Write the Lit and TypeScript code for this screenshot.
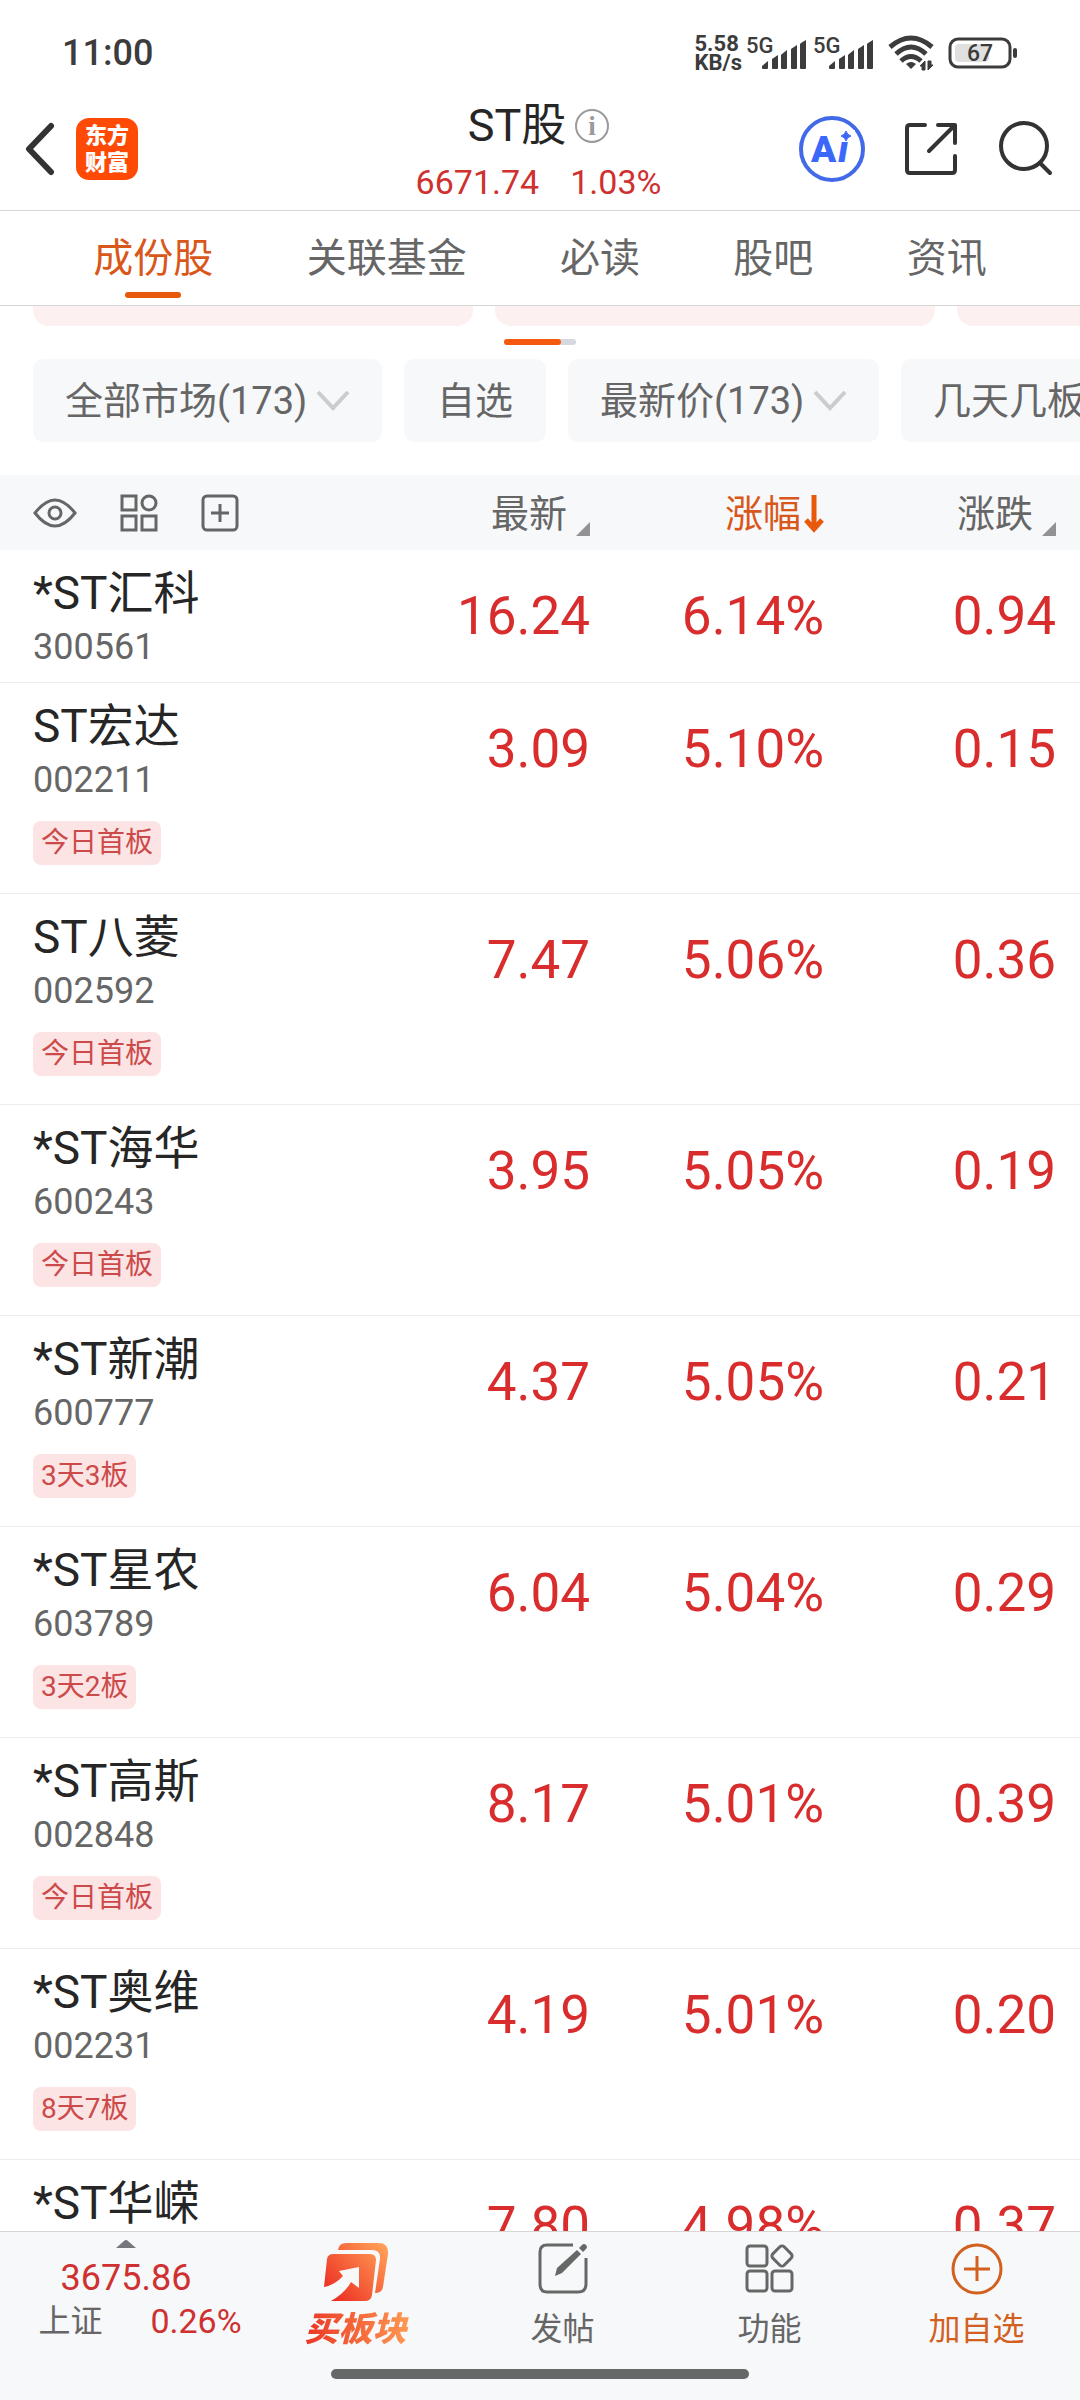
import { LitElement, html, css, nothing } from "lit";
import { customElement, property, state } from "lit/decorators.js";
import { classMap } from "lit/directives/class-map.js";

interface Stock {
  name: string;
  code: string;
  price: string;
  percent: string;
  change: string;
  tag?: string;
}

const STOCKS: Stock[] = [
  { name: "*ST汇科", code: "300561", price: "16.24", percent: "6.14%", change: "0.94" },
  { name: "ST宏达", code: "002211", price: "3.09", percent: "5.10%", change: "0.15", tag: "今日首板" },
  { name: "ST八菱", code: "002592", price: "7.47", percent: "5.06%", change: "0.36", tag: "今日首板" },
  { name: "*ST海华", code: "600243", price: "3.95", percent: "5.05%", change: "0.19", tag: "今日首板" },
  { name: "*ST新潮", code: "600777", price: "4.37", percent: "5.05%", change: "0.21", tag: "3天3板" },
  { name: "*ST星农", code: "603789", price: "6.04", percent: "5.04%", change: "0.29", tag: "3天2板" },
  { name: "*ST高斯", code: "002848", price: "8.17", percent: "5.01%", change: "0.39", tag: "今日首板" },
  { name: "*ST奥维", code: "002231", price: "4.19", percent: "5.01%", change: "0.20", tag: "8天7板" },
  { name: "*ST华嵘", code: "", price: "7.80", percent: "4.98%", change: "0.37" },
];

const TABS = ["成份股", "关联基金", "必读", "股吧", "资讯"];

const base = css`
  :host, *, *::before, *::after { box-sizing: border-box; }
  button, select {
    margin: 0;
    padding: 0;
    border: 0;
    background: none;
    font: inherit;
    color: inherit;
    appearance: none;
    cursor: pointer;
  }
  svg { display: block; flex: none; }
`;

@customElement("status-bar")
class StatusBar extends LitElement {
  static styles = [base, css`
    :host {
      display: flex;
      flex: none;
      align-items: center;
      justify-content: space-between;
      height: 88px;
      padding: 18px 63px 0 62px;
      color: #3c3c3c;
    }
    .time { font-size: 36px; font-weight: 500; line-height: 40px; }
    .icons { display: flex; align-items: center; }
    .speed { font-size: 22px; line-height: 19px; font-weight: 700; margin-right: 4px; }
    .signal { margin-right: 5px; overflow: visible; }
    .wifi { margin: 0 14px 0 8px; }
    .g { font: 500 22px Roboto, sans-serif; fill: #3c3c3c; }
    .level { font: 500 23px Roboto, sans-serif; fill: #3c3c3c; }
  `];

  private signal() {
    return html`<svg class="signal" width="62" height="34" viewBox="0 0 62 34" fill="#3c3c3c">
      <text class="g" x="0" y="17">5G</text>
      <path d="M16 30l6-5v7q0 1-1 1h-4q-1 0-1-1zM26 23l6-4v13q0 1-1 1h-4q-1 0-1-1v-9zM36 18l5-4v18q0 1-1 1h-4q-1 0-1-1V19zM45 13l6-4v23q0 1-1 1h-4q-1 0-1-1V13zM55 7l5-3v28q0 1-1 1h-4q-1 0-1-1V8z" />
    </svg>`;
  }

  render() {
    return html`
      <div class="time">11:00</div>
      <div class="icons">
        <div class="speed">5.58<br />KB/s</div>
        ${this.signal()}${this.signal()}
        <svg class="wifi" width="46" height="36" viewBox="0 0 46 36" fill="none" stroke="#3c3c3c" stroke-width="5">
          <path d="M2 12Q23-6 44 12M8 19Q23 5 38 19M13 26Q23 17 33 26" />
          <path d="M18 29q5-4 10 0l-5 5z" fill="#3c3c3c" stroke="none" />
          <path d="M32 31l5-5v9h-3v-4zM45 30l-5 5v-9h3v4z" fill="#3c3c3c" stroke="#3c3c3c" stroke-width="1" />
        </svg>
        <svg width="69" height="32" viewBox="0 0 69 32">
          <rect x="2" y="2" width="60" height="28" rx="8" fill="#fff" stroke="#3c3c3c" stroke-width="3" />
          <rect x="7" y="7" width="34" height="18" rx="4" fill="#e0e0e0" />
          <rect x="65" y="11" width="4" height="10" rx="2" fill="#3c3c3c" />
          <text class="level" x="32" y="24" text-anchor="middle">67</text>
        </svg>
      </div>`;
  }
}

@customElement("page-header")
class PageHeader extends LitElement {
  static styles = [base, css`
    :host {
      display: grid;
      flex: none;
      grid-template-columns: 1fr auto 1fr;
      align-items: center;
      height: 123px;
      padding: 0 27px 0 24px;
      border-bottom: 1px solid #d6d6d6;
    }
    .left, .right, .title { display: flex; align-items: center; }
    .left { gap: 20px; }
    .right { justify-content: flex-end; gap: 39px; }
    .logo {
      display: grid;
      place-content: center;
      width: 62px;
      height: 62px;
      border-radius: 13px;
      background: #ff4a06;
      color: #fff;
      font-size: 22px;
      line-height: 27px;
      font-weight: 900;
      text-decoration: none;
    }
    .middle { padding-top: 10px; }
    .title {
      margin: 0;
      justify-content: center;
      gap: 9px;
      font-size: 45px;
      line-height: 56px;
      font-weight: 400;
      color: #262626;
    }
    .quote {
      display: flex;
      justify-content: center;
      gap: 31px;
      font-size: 34px;
      line-height: 56px;
      color: #cf3030;
    }
    .info { font: 700 27px "Liberation Serif", serif; fill: #9a9a9a; }
    .ai { font: 900 37px Roboto, sans-serif; fill: #3b68fb; }
    .slant { font-style: italic; }
  `];

  render() {
    return html`
      <div class="left">
        <button aria-label="返回">
          <svg width="32" height="54" viewBox="0 0 32 54" fill="none" stroke="#333" stroke-width="6" stroke-linecap="round" stroke-linejoin="round">
            <path d="M27 4L5 27l22 23" />
          </svg>
        </button>
        <a class="logo" href="#home">东方<br />财富</a>
      </div>
      <div class="middle">
        <h1 class="title">
          <span>ST股</span>
          <button aria-label="说明">
            <svg width="34" height="34" viewBox="0 0 34 34">
              <circle cx="17" cy="17" r="16" fill="none" stroke="#9a9a9a" stroke-width="2" />
              <text class="info" x="17" y="26" text-anchor="middle">i</text>
            </svg>
          </button>
        </h1>
        <div class="quote"><span>6671.74</span><span>1.03%</span></div>
      </div>
      <div class="right">
        <button aria-label="智能助手">
          <svg width="66" height="66" viewBox="0 0 66 66">
            <circle cx="33" cy="33" r="31" fill="#fff" stroke="#4169e8" stroke-width="4" />
            <text class="ai" x="12" y="46">A<tspan class="slant" dx="2">i</tspan></text>
            <rect x="38" y="14" width="18" height="10" fill="#fff" />
            <path d="M47 15q1 4 5 5q-4 1-5 5q-1-4-5-5q4-1 5-5z" fill="#3b68fb" stroke="#3b68fb" stroke-width="1" />
          </svg>
        </button>
        <button aria-label="分享">
          <svg width="54" height="54" viewBox="0 0 54 54" fill="none" stroke="#333" stroke-width="4" stroke-linecap="round" stroke-linejoin="round">
            <path d="M21 3H6q-3 0-3 3v42q0 3 3 3h42q3 0 3-3V34M34 3h17v18M51 3L25 29" />
          </svg>
        </button>
        <button aria-label="搜索">
          <svg width="56" height="56" viewBox="0 0 56 56" fill="none" stroke="#333" stroke-width="4" stroke-linecap="round">
            <circle cx="27" cy="25" r="23" />
            <path d="M43 42l10 10" />
          </svg>
        </button>
      </div>`;
  }
}

@customElement("section-tabs")
class SectionTabs extends LitElement {
  @state() private current = 0;

  static styles = [base, css`
    :host {
      display: flex;
      flex: none;
      justify-content: space-evenly;
      height: 95px;
      border-bottom: 1px solid #d6d6d6;
      font-size: 40px;
      color: #666;
    }
    .tab {
      display: flex;
      flex-direction: column;
      align-items: center;
      padding-top: 18px;
      line-height: 60px;
      white-space: nowrap;
    }
    .bar { width: 56px; height: 6px; margin-top: 3px; border-radius: 3px; }
    .active { color: #d9571a; }
    .active .bar { background: #e8590c; }
  `];

  render() {
    return TABS.map((label, i) => html`
      <button class=${classMap({ tab: true, active: i === this.current })}
        aria-pressed=${i === this.current ? "true" : "false"}
        @click=${() => (this.current = i)}>
        ${label}<span class="bar"></span>
      </button>`);
  }
}

@customElement("card-strip")
class CardStrip extends LitElement {
  static styles = [base, css`
    :host { display: block; flex: none; }
    .cards { display: flex; gap: 22px; padding-left: 33px; overflow: hidden; }
    .card { flex: none; width: 440px; height: 20px; border-radius: 0 0 16px 16px; background: #fdf0f0; }
    .track {
      width: 72px;
      height: 6px;
      margin: 13px auto 14px;
      border-radius: 3px;
      background: #d5d8de;
    }
    .thumb { width: 57px; height: 6px; border-radius: 3px; background: #f5590f; }
  `];

  render() {
    return html`
      <div class="cards"><div class="card"></div><div class="card"></div><div class="card"></div></div>
      <div class="track"><div class="thumb"></div></div>`;
  }
}

@customElement("filter-row")
class FilterRow extends LitElement {
  static styles = [base, css`
    :host {
      display: flex;
      flex: none;
      gap: 22px;
      padding: 0 0 33px 33px;
      overflow: hidden;
      font-size: 38px;
      line-height: 56px;
      color: #666;
      white-space: nowrap;
    }
    .chip {
      display: grid;
      align-items: center;
      flex: none;
      height: 83px;
      border-radius: 10px;
      background: #f7f8fa;
    }
    .plain { padding: 0 33px; }
    .select { grid-area: 1 / 1; height: 83px; padding: 0 74px 0 32px; }
    .arrow { grid-area: 1 / 1; justify-self: end; margin-right: 32px; pointer-events: none; }
  `];

  private menu(label: string) {
    return html`<div class="chip">
      <select class="select" aria-label=${label}><option>${label}</option></select>
      <svg class="arrow" width="34" height="22" viewBox="0 0 34 22" fill="none" stroke="#ccc" stroke-width="4">
        <path d="M2 2l15 16L32 2" />
      </svg>
    </div>`;
  }

  render() {
    return html`
      ${this.menu("全部市场(173)")}
      <button class="chip plain">自选</button>
      ${this.menu("最新价(173)")}
      ${this.menu("几天几板")}`;
  }
}

@customElement("stock-table")
class StockTable extends LitElement {
  @property({ attribute: false }) stocks: Stock[] = [];

  static styles = [base, css`
    :host { display: block; flex: 1; min-height: 0; overflow: hidden; }
    .table { width: 100%; border-collapse: separate; border-spacing: 0; table-layout: fixed; }
    .price { width: 234px; }
    .percent { width: 234px; }
    .change { width: 256px; }
    .head {
      height: 75px;
      padding: 0;
      background: #f7f8fa;
      font-size: 38px;
      line-height: 56px;
      font-weight: 400;
      color: #666;
      text-align: right;
    }
    .tools { display: flex; align-items: center; gap: 43px; padding-left: 33px; }
    .sort { display: inline-flex; align-items: center; gap: 9px; vertical-align: middle; white-space: nowrap; }
    .corner { align-self: flex-end; margin-bottom: 6px; }
    .sorted { gap: 3px; color: #d9571a; }
    .head.change { padding-right: 24px; }
    .cell { padding: 0; border-bottom: 1px solid #ececec; vertical-align: top; text-align: right; }
    .cell.change { padding-right: 24px; }
    .who { padding: 13px 0 11px 33px; text-align: left; font-weight: 400; }
    .tagged { padding-bottom: 28px; }
    .name { font-size: 46px; line-height: 60px; color: #262626; white-space: nowrap; }
    .code { height: 48px; font-size: 36px; line-height: 48px; color: #666; }
    .tag {
      display: block;
      width: fit-content;
      margin-top: 17px;
      padding: 0 8px;
      border-radius: 8px;
      background: #fce4e4;
      font-size: 28px;
      line-height: 44px;
      color: #cc4a4a;
    }
    .value { font-size: 53px; line-height: 132px; color: #d92d2d; }
  `];

  private corner() {
    return html`<svg class="corner" width="14" height="14" viewBox="0 0 14 14"><path d="M14 0v14H0z" fill="#919196" /></svg>`;
  }

  render() {
    return html`
      <table class="table">
        <thead>
          <tr>
            <th class="head" scope="col">
              <div class="tools">
                <button aria-label="显示">
                  <svg width="44" height="30" viewBox="0 0 44 30" fill="none" stroke="#666" stroke-width="3">
                    <path d="M2 15Q12 2 22 2t20 13Q32 28 22 28T2 15z" /><circle cx="22" cy="15" r="6" />
                  </svg>
                </button>
                <button aria-label="宫格">
                  <svg width="38" height="38" viewBox="0 0 38 38" fill="none" stroke="#666" stroke-width="3">
                    <rect x="2" y="2" width="14" height="14" /><circle cx="29" cy="9" r="7" />
                    <rect x="2" y="22" width="14" height="14" /><rect x="22" y="22" width="14" height="14" />
                  </svg>
                </button>
                <button aria-label="添加">
                  <svg width="38" height="38" viewBox="0 0 38 38" fill="none" stroke="#666" stroke-width="3">
                    <rect x="2" y="2" width="34" height="34" rx="4" /><path d="M19 10v18M10 19h18" />
                  </svg>
                </button>
              </div>
            </th>
            <th class="head price" scope="col"><button class="sort">最新${this.corner()}</button></th>
            <th class="head percent" scope="col" aria-sort="descending">
              <button class="sort sorted">涨幅<svg width="20" height="38" viewBox="0 0 20 38" fill="none" stroke="#e8590c" stroke-width="5">
                <path d="M10 0v34M2 25l8 9 8-9" /></svg></button>
            </th>
            <th class="head change" scope="col"><button class="sort">涨跌${this.corner()}</button></th>
          </tr>
        </thead>
        <tbody>
          ${this.stocks.map((s) => html`
            <tr>
              <th scope="row" class=${classMap({ cell: true, who: true, tagged: !!s.tag })}>
                <div class="name">${s.name}</div>
                <div class="code">${s.code}</div>
                ${s.tag ? html`<span class="tag">${s.tag}</span>` : nothing}
              </th>
              <td class="cell value">${s.price}</td>
              <td class="cell value">${s.percent}</td>
              <td class="cell value change">${s.change}</td>
            </tr>`)}
        </tbody>
      </table>`;
  }
}

@customElement("bottom-bar")
class BottomBar extends LitElement {
  static styles = [base, css`
    :host { display: block; flex: none; border-top: 1px solid #d6d6d6; background: #f7f8fa; color: #666; }
    .bar { display: grid; grid-template-columns: 252px repeat(4, 1fr); align-items: start; height: 137px; }
    .index { display: flex; flex-direction: column; align-items: center; padding-top: 8px; line-height: 40px; }
    .caret { margin-bottom: 10px; }
    .point { margin-bottom: 3px; font-size: 36px; color: #cf3030; }
    .detail { display: flex; gap: 48px; padding-left: 28px; font-size: 32px; }
    .rate { font-size: 34px; color: #cf3030; }
    .action { display: flex; flex-direction: column; align-items: center; gap: 10px; padding-top: 11px; font-size: 32px; line-height: 40px; }
    .icon { display: grid; height: 56px; justify-items: center; align-items: start; }
    .buy {
      padding: 0 4px;
      font-size: 34px;
      font-weight: 900;
      font-style: italic;
      color: transparent;
      background: linear-gradient(90deg, #ea3323, #ff9a52);
      background-clip: text;
      -webkit-background-clip: text;
    }
    .add { color: #d2601f; }
    .home { width: 418px; height: 10px; margin: 0 auto 21px; border-radius: 5px; background: #666867; }
  `];

  private action(icon: unknown, label: string, kind = "") {
    return html`<button class=${classMap({ action: true, add: kind === "add" })}>
      <span class="icon">${icon}</span><span class=${classMap({ buy: kind === "buy" })}>${label}</span>
    </button>`;
  }

  render() {
    const buy = html`<svg width="66" height="60" viewBox="0 0 66 60">
      <defs><linearGradient id="g" gradientUnits="userSpaceOnUse" x1="5" y1="55" x2="60" y2="5">
        <stop offset="0" stop-color="#ec2a20" /><stop offset="1" stop-color="#ff9c55" />
      </linearGradient></defs>
      <path fill="url(#g)" d="M15 7q1-7 8-7h32q11 0 10 11l-5 33q-1 6-8 6l5-34q1-9-8-9z" />
      <path fill="url(#g)" d="M10 11h37q6 0 6 6l-4 35q-1 6-7 6H8q14-8 20-19l8 6V24l-20 4 4 5Q12 42 1 44L4 16q1-5 6-5z" />
    </svg>`;
    const post = html`<svg width="50" height="51" viewBox="0 0 50 51" fill="none" stroke="#666867" stroke-width="3">
      <path d="M35 2H9Q2 2 2 9v32q0 8 7 8h31q8 0 8-8V15" />
      <path d="M17 33l2-8L39 7l4 4-19 19z" fill="#666867" stroke="none" />
      <path d="M41 5l3-3q2-2 4 0t0 4l-3 3z" fill="#666867" stroke="none" />
    </svg>`;
    const tools = html`<svg width="50" height="50" viewBox="0 0 50 50" fill="none" stroke="#666867" stroke-width="3">
      <rect x="2" y="3" width="20" height="20" rx="3" /><rect x="2" y="28" width="20" height="20" rx="3" />
      <rect x="27" y="28" width="20" height="20" rx="3" />
      <rect x="29" y="5" width="16" height="16" rx="3" transform="rotate(45 37 13)" />
    </svg>`;
    const add = html`<svg width="52" height="52" viewBox="0 0 52 52" fill="none" stroke="#d2601f" stroke-width="3">
      <circle cx="26" cy="26" r="24" /><path d="M26 13v25M13 26h26" />
    </svg>`;
    return html`
      <div class="bar">
        <button class="index">
          <svg class="caret" width="20" height="8" viewBox="0 0 20 8"><path d="M0 8l8-7q2-2 4 0l8 7z" fill="#76767c" /></svg>
          <span class="point">3675.86</span>
          <span class="detail"><span>上证</span><span class="rate">0.26%</span></span>
        </button>
        ${this.action(buy, "买板块", "buy")}
        ${this.action(post, "发帖")}
        ${this.action(tools, "功能")}
        ${this.action(add, "加自选", "add")}
      </div>
      <div class="home"></div>`;
  }
}

@customElement("app-root")
class AppRoot extends LitElement {
  static styles = css`
    :host {
      display: flex;
      flex-direction: column;
      height: 100vh;
      overflow: hidden;
      background: #fff;
      font-family: Roboto, "Noto Sans CJK SC", sans-serif;
    }
  `;

  render() {
    return html`
      <status-bar></status-bar>
      <page-header></page-header>
      <section-tabs></section-tabs>
      <card-strip></card-strip>
      <filter-row></filter-row>
      <stock-table .stocks=${STOCKS}></stock-table>
      <bottom-bar></bottom-bar>`;
  }
}
